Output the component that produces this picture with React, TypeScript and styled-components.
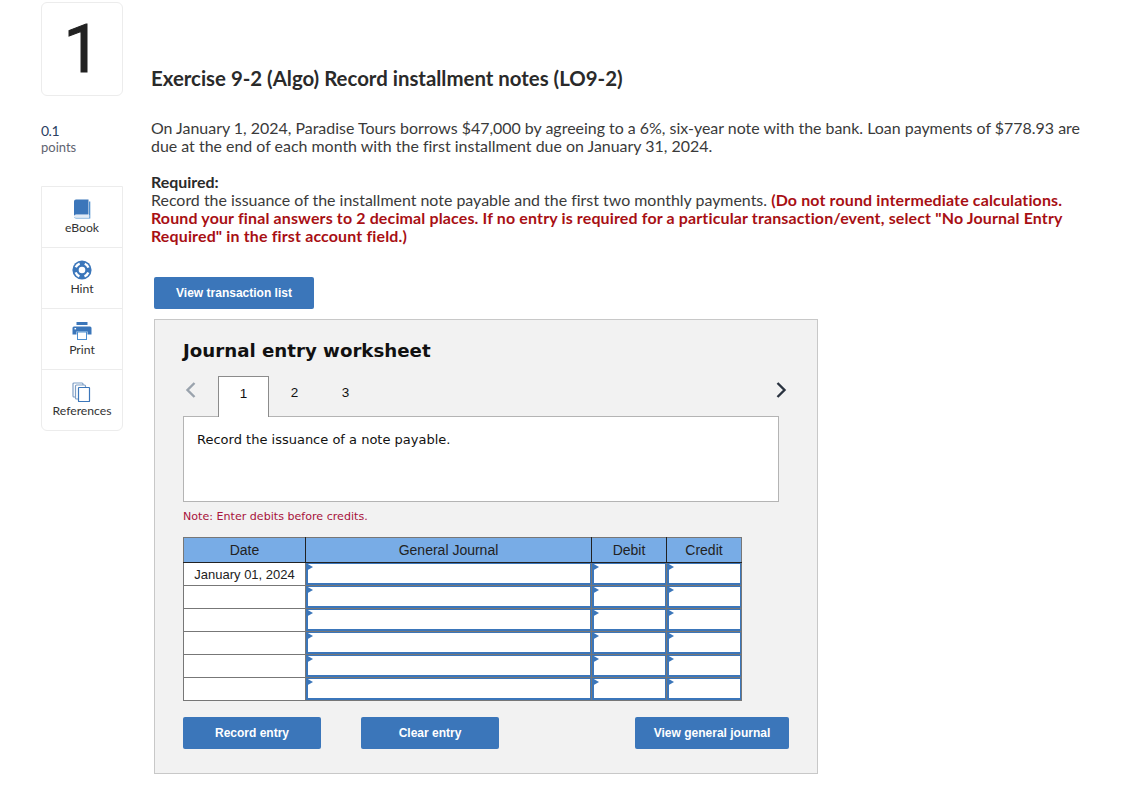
import React from 'react';
import styled, { createGlobalStyle } from 'styled-components';

const GlobalStyle = createGlobalStyle`
  html, body {
    margin: 0;
    padding: 0;
    background: #fff;
    font-family: Lato, "Liberation Sans", sans-serif;
    font-variant-ligatures: none;
    color: #2d2d2d;
  }
`;

const Page = styled.div`
  display: flex;
  gap: 28px;
  width: 1136px;
  height: 806px;
  box-sizing: border-box;
  padding: 2px 0 0 41px;
  overflow: hidden;
`;

const Sidebar = styled.aside`
  width: 82px;
  flex: none;
`;

const NumberBox = styled.div`
  width: 82px;
  height: 94px;
  box-sizing: border-box;
  border: 1px solid #ececec;
  border-radius: 6px;
  display: flex;
  align-items: center;
  justify-content: center;
  font-family: Roboto, sans-serif;
  font-size: 66px;
  font-weight: 400;
  color: #222;
  -webkit-text-stroke: 1px #222;
`;

const Points = styled.div`
  margin-top: 27px;
  font-size: 13px;
  line-height: 16px;
`;

const PointsValue = styled.div`
  color: #2b3f63;
  font-size: 14px;
  letter-spacing: -0.5px;
`;

const PointsLabel = styled.div`
  color: #5f6470;
`;

const ToolCard = styled.div`
  margin-top: 31px;
  border: 1px solid #ececec;
  border-radius: 0 0 6px 6px;
`;

const Tool = styled.div`
  height: 61px;
  box-sizing: border-box;
  display: flex;
  flex-direction: column;
  align-items: center;
  padding-top: 12px;
  font-size: 12.2px;
  line-height: 14px;
  color: #333;
  &:first-child {
    height: 60px;
  }
  & + & {
    border-top: 1px solid #ececec;
  }
  svg {
    display: block;
    margin-bottom: 2px;
  }
`;

const Main = styled.main`
  flex: 1;
  min-width: 0;
`;

const Title = styled.h1`
  margin: 64px 0 0;
  font-size: 20.4px;
  line-height: 24px;
  font-weight: 700;
  color: #2a2a2a;
`;

const Paragraph = styled.p`
  margin: 29px 0 0;
  width: 940px;
  font-size: 15.95px;
  line-height: 18px;
  color: #3a3a3a;
`;

const RequiredBlock = styled.div`
  margin-top: 18px;
  width: 930px;
  font-size: 15.95px;
  line-height: 18px;
  color: #3a3a3a;
`;

const RequiredLabel = styled.div`
  font-weight: 700;
  color: #2a2a2a;
`;

const Warning = styled.strong`
  color: #a80f14;
  font-weight: 700;
  letter-spacing: 0.16px;
`;

const ActionButton = styled.button<{ $width: number }>`
  width: ${p => p.$width}px;
  height: 32px;
  padding: 0;
  border: 0;
  border-radius: 2px;
  background: #3b76ba;
  color: #fff;
  font-family: "Liberation Sans", Arial, sans-serif;
  font-size: 12px;
  font-weight: 700;
`;

const TransactionRow = styled.div`
  margin: 32px 0 0 3px;
  display: flex;
`;

const Worksheet = styled.section`
  margin: 10px 0 0 3px;
  width: 664px;
  height: 455px;
  box-sizing: border-box;
  padding: 19px 28px 0;
  background: #f2f2f2;
  border: 1px solid #c8c8c8;
`;

const WorksheetTitle = styled.h2`
  margin: 0;
  font-family: "DejaVu Sans", Verdana, sans-serif;
  font-size: 18.2px;
  line-height: 24px;
  font-weight: 700;
  color: #111;
`;

const TabBar = styled.div`
  margin-top: 13px;
  display: flex;
  align-items: stretch;
  height: 41px;
  width: 606px;
`;

const Chevron = styled.span<{ $muted?: boolean }>`
  display: flex;
  align-items: flex-start;
  justify-content: center;
  padding-top: 5px;
  width: 14px;
  color: ${p => (p.$muted ? '#9aa3ad' : '#2a3340')};
`;

const BackChevron = styled(Chevron)`
  margin: 0 20px 0 1px;
`;

const NextChevron = styled(Chevron)`
  margin: 0 1px 0 auto;
`;

const TabItem = styled.div<{ $active?: boolean }>`
  width: 51px;
  box-sizing: border-box;
  display: flex;
  align-items: flex-start;
  justify-content: center;
  padding-top: 8px;
  font-family: "Liberation Sans", Arial, sans-serif;
  font-size: 13.5px;
  line-height: 17px;
  color: #111;
  position: relative;
  z-index: 1;
  ${p => p.$active && `
    background: #fff;
    border: 1px solid #8c8c8c;
    border-bottom: 0;
  `}
`;

const Prompt = styled.div`
  width: 596px;
  height: 86px;
  box-sizing: border-box;
  margin-top: -1px;
  padding: 14px 13px;
  background: #fff;
  border: 1px solid #b4b4b4;
  font-family: "DejaVu Sans", Verdana, sans-serif;
  font-size: 13px;
  line-height: 17px;
  color: #111;
`;

const Note = styled.div`
  margin-top: 8px;
  font-family: "DejaVu Sans", Verdana, sans-serif;
  font-size: 11.1px;
  line-height: 14px;
  color: #a8123c;
`;

const JournalTable = styled.table`
  margin-top: 13px;
  width: 559px;
  table-layout: fixed;
  border-collapse: collapse;
  font-family: "Liberation Sans", Arial, sans-serif;
  border: 1px solid #777;
`;

const HeadCell = styled.th<{ $width: number }>`
  width: ${p => p.$width}px;
  box-sizing: border-box;
  height: 25px;
  padding: 0;
  background: #78ace6;
  border: 1px solid #222;
  border-top-color: #777;
  font-weight: 400;
  font-size: 14px;
  color: #222;
  &:first-child {
    border-left-color: #777;
  }
  &:last-child {
    border-right-color: #777;
  }
`;

const DateCell = styled.td`
  height: 23px;
  box-sizing: border-box;
  padding: 0;
  background: #fff;
  border: 1px solid #777;
  text-align: center;
  font-size: 13px;
  color: #222;
`;

const EntryCell = styled.td`
  height: 23px;
  box-sizing: border-box;
  padding: 0;
  background: #fff;
  border: 1px solid #777;
  position: relative;
  box-shadow: inset 0 0 0 1px #3b76ba, inset 1px -1px 0 1px #3b76ba;
  &::before {
    content: '';
    position: absolute;
    top: 0;
    left: 0;
    border-left: 7px solid #3b76ba;
    border-top: 4px solid transparent;
    border-bottom: 4px solid transparent;
  }
`;

const ButtonRow = styled.div`
  margin-top: 16px;
  width: 606px;
  display: flex;
  gap: 40px;
`;

const PushedRight = styled.div`
  margin-left: auto;
  display: flex;
`;

const BookIcon = () => (
  <svg width="20" height="20" viewBox="0 0 20 20">
    <path d="M2 2.5A2 2 0 0 1 4 .5h12.5v15H4a2 2 0 0 0-2 2Z" fill="#3b76ba" />
    <path d="M17 2.5h1.3V19.5H4a2 2 0 0 1-2-2 2 2 0 0 0 2 1.2h13.3V16H17Z" fill="#4d8fd0" />
    <rect x="3" y="16.2" width="14" height="1.6" fill="#dbe7f4" />
  </svg>
);

const HintIcon = () => (
  <svg width="20" height="20" viewBox="0 0 20 20">
    <circle cx="10" cy="10" r="9.6" fill="#3b76ba" />
    <circle cx="10" cy="10" r="6.8" fill="none" stroke="#fff" strokeWidth="2.4" strokeDasharray="5.5 5.18" strokeDashoffset="-2.59" />
    <circle cx="10" cy="10" r="3.3" fill="#fff" />
  </svg>
);

const PrintIcon = () => (
  <svg width="20" height="20" viewBox="0 0 20 20">
    <rect x="4.5" y="1" width="11" height="3" fill="#3b76ba" />
    <path d="M2 5.5h16a1.5 1.5 0 0 1 1.5 1.5v6.5h-4v-3h-11v3h-4V7A1.5 1.5 0 0 1 2 5.5Z" fill="#3b76ba" />
    <rect x="5.5" y="11" width="9" height="7.5" fill="#fff" stroke="#4d8fd0" />
    <rect x="2.5" y="7" width="1.6" height="1.4" fill="#fff" />
  </svg>
);

const CopyIcon = () => (
  <svg width="20" height="20" viewBox="0 0 20 20" fill="#fff" stroke="#7f9fc6" strokeWidth="1.2">
    <rect x="1" y="1" width="10" height="14" rx="1" />
    <rect x="3.5" y="3" width="10" height="14" rx="1" />
    <rect x="6.5" y="5.5" width="11" height="14" rx="0.5" stroke="#3b76ba" />
  </svg>
);

const ChevronIcon = ({ flip }: { flip?: boolean }) => (
  <svg width="12" height="18" viewBox="0 0 12 18" fill="none" stroke="currentColor" strokeWidth="2.4">
    <path d={flip ? 'M2.5 2l7 7-7 7' : 'M9.5 2l-7 7 7 7'} />
  </svg>
);

const tools = [
  { label: 'eBook', icon: <BookIcon /> },
  { label: 'Hint', icon: <HintIcon /> },
  { label: 'Print', icon: <PrintIcon /> },
  { label: 'References', icon: <CopyIcon /> },
];

const rows = ['January 01, 2024', '', '', '', '', ''];

export default function App() {
  return (
    <>
      <GlobalStyle />
      <Page>
        <Sidebar>
          <NumberBox>1</NumberBox>
          <Points>
            <PointsValue>0.1</PointsValue>
            <PointsLabel>points</PointsLabel>
          </Points>
          <ToolCard>
            {tools.map(tool => (
              <Tool key={tool.label}>
                {tool.icon}
                {tool.label}
              </Tool>
            ))}
          </ToolCard>
        </Sidebar>

        <Main>
          <Title>Exercise 9-2 (Algo) Record installment notes (LO9-2)</Title>
          <Paragraph>
            On January 1, 2024, Paradise Tours borrows $47,000 by agreeing to a 6%, six-year note with the bank. Loan payments of $778.93 are due at the end of each month with the first installment due on January 31, 2024.
          </Paragraph>
          <RequiredBlock>
            <RequiredLabel>Required:</RequiredLabel>
            Record the issuance of the installment note payable and the first two monthly payments.{' '}
            <Warning>
              (Do not round intermediate calculations. Round your final answers to 2 decimal places. If no entry is required for a particular transaction/event, select "No Journal Entry Required" in the first account field.)
            </Warning>
          </RequiredBlock>

          <TransactionRow>
            <ActionButton $width={160}>View transaction list</ActionButton>
          </TransactionRow>

          <Worksheet>
            <WorksheetTitle>Journal entry worksheet</WorksheetTitle>
            <TabBar>
              <BackChevron $muted>
                <ChevronIcon />
              </BackChevron>
              <TabItem $active>1</TabItem>
              <TabItem>2</TabItem>
              <TabItem>3</TabItem>
              <NextChevron>
                <ChevronIcon flip />
              </NextChevron>
            </TabBar>
            <Prompt>Record the issuance of a note payable.</Prompt>
            <Note>Note: Enter debits before credits.</Note>
            <JournalTable>
              <thead>
                <tr>
                  <HeadCell $width={122}>Date</HeadCell>
                  <HeadCell $width={286}>General Journal</HeadCell>
                  <HeadCell $width={75}>Debit</HeadCell>
                  <HeadCell $width={75}>Credit</HeadCell>
                </tr>
              </thead>
              <tbody>
                {rows.map((date, i) => (
                  <tr key={i}>
                    <DateCell>{date}</DateCell>
                    <EntryCell />
                    <EntryCell />
                    <EntryCell />
                  </tr>
                ))}
              </tbody>
            </JournalTable>
            <ButtonRow>
              <ActionButton $width={138}>Record entry</ActionButton>
              <ActionButton $width={138}>Clear entry</ActionButton>
              <PushedRight>
                <ActionButton $width={154}>View general journal</ActionButton>
              </PushedRight>
            </ButtonRow>
          </Worksheet>
        </Main>
      </Page>
    </>
  );
}
